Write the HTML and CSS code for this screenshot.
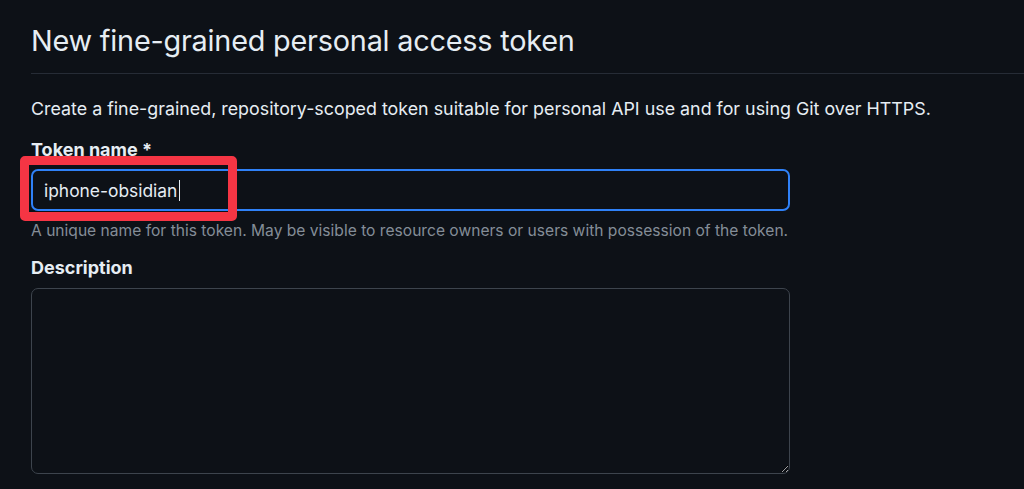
FILE: index.html
```html
<!DOCTYPE html>
<html lang="en">
<head>
<meta charset="utf-8">
<title>New fine-grained personal access token</title>
<link rel="stylesheet" href="styles.css">
</head>
<body>
<main class="page">
  <h2 class="page-title">New fine-grained personal access token</h2>
  <p class="intro">Create a fine-grained, repository-scoped token suitable for personal API use and for using Git over HTTPS.</p>
  <div class="field">
    <label class="field-label">Token name *</label>
    <div class="input-wrap">
      <div class="text-input"><span class="value">iphone-obsidian</span><span class="caret"></span></div>
      <div class="highlight"></div>
    </div>
    <p class="field-note">A unique name for this token. May be visible to resource owners or users with possession of the token.</p>
  </div>
  <div class="field">
    <label class="field-label desc-label">Description</label>
    <textarea class="text-area"></textarea>
  </div>
</main>
</body>
</html>
```
FILE: styles.css
```css
html, body {
  margin: 0;
  padding: 0;
  background: #0d1117;
  color: #e6edf3;
  font-family: Inter, "Noto Sans", sans-serif;
  color-scheme: dark;
  overflow: hidden;
}

.page {
  padding: 21px 0 0 31px;
}

.page-title {
  margin: 0;
  font-size: 28.8px;
  font-weight: 400;
  line-height: 40px;
  padding-bottom: 12px;
  border-bottom: 1px solid #262c36;
  letter-spacing: -0.2px;
}

.intro {
  margin: 23px 0 0;
  font-size: 17.85px;
  line-height: 24px;
}

.field {
  display: flex;
  flex-direction: column;
  width: 759px;
}

.field-label {
  margin-top: 17px;
  font-size: 18px;
  font-weight: 700;
  line-height: 24px;
}

.desc-label {
  margin-top: 15px;
}

.input-wrap {
  position: relative;
  margin-top: 7px;
}

.text-input {
  box-sizing: border-box;
  height: 42px;
  border: 2px solid #2f81f7;
  border-radius: 7px;
  padding: 0 10px 0 11px;
  display: flex;
  align-items: center;
  font-size: 17.4px;
}

.caret {
  display: inline-block;
  width: 1px;
  height: 21px;
  background: #e6edf3;
  margin-left: 2px;
}

.highlight {
  position: absolute;
  left: -11px;
  top: -13px;
  width: 217px;
  height: 65px;
  box-sizing: border-box;
  border: 9px solid #f53544;
  border-radius: 5px;
}

.field-note {
  margin: 10px 0 0;
  font-size: 15.6px;
  line-height: 20px;
  color: #848d97;
}

.text-area {
  margin-top: 8px;
  box-sizing: border-box;
  width: 759px;
  height: 186px;
  background: #0d1117;
  border: 1px solid #3d444d;
  border-radius: 7px;
  color: #e6edf3;
  font: 18px Inter, sans-serif;
  resize: vertical;
  outline: none;
}
```
